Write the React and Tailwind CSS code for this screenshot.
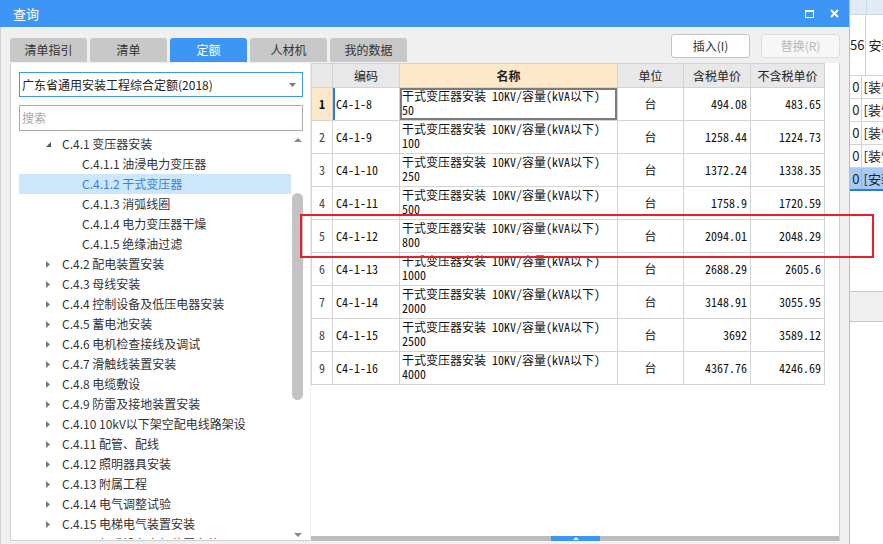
import React from "react";

// font stacks
const UI = "font-['Noto_Sans_CJK_SC','Noto_Sans',sans-serif]";
const SONG = "font-['Noto_Sans_Mono_CJK_SC','Noto_Sans_CJK_SC',monospace]";

const tabs = ["清单指引", "清单", "定额", "人材机", "我的数据"];

const tree = [
  { lv: 1, open: true, t: "C.4.1 变压器安装" },
  { lv: 2, t: "C.4.1.1 油浸电力变压器" },
  { lv: 2, t: "C.4.1.2 干式变压器", sel: true },
  { lv: 2, t: "C.4.1.3 消弧线圈" },
  { lv: 2, t: "C.4.1.4 电力变压器干燥" },
  { lv: 2, t: "C.4.1.5 绝缘油过滤" },
  { lv: 1, t: "C.4.2 配电装置安装" },
  { lv: 1, t: "C.4.3 母线安装" },
  { lv: 1, t: "C.4.4 控制设备及低压电器安装" },
  { lv: 1, t: "C.4.5 蓄电池安装" },
  { lv: 1, t: "C.4.6 电机检查接线及调试" },
  { lv: 1, t: "C.4.7 滑触线装置安装" },
  { lv: 1, t: "C.4.8 电缆敷设" },
  { lv: 1, t: "C.4.9 防雷及接地装置安装" },
  { lv: 1, t: "C.4.10 10kV以下架空配电线路架设" },
  { lv: 1, t: "C.4.11 配管、配线" },
  { lv: 1, t: "C.4.12 照明器具安装" },
  { lv: 1, t: "C.4.13 附属工程" },
  { lv: 1, t: "C.4.14 电气调整试验" },
  { lv: 1, t: "C.4.15 电梯电气装置安装" },
  { lv: 1, t: "C.4.16 起重设备电气装置安装" },
];

const rows = [
  ["C4-1-8", "50", "494.08", "483.65"],
  ["C4-1-9", "100", "1258.44", "1224.73"],
  ["C4-1-10", "250", "1372.24", "1338.35"],
  ["C4-1-11", "500", "1758.9", "1720.59"],
  ["C4-1-12", "800", "2094.01", "2048.29"],
  ["C4-1-13", "1000", "2688.29", "2605.6"],
  ["C4-1-14", "2000", "3148.91", "3055.95"],
  ["C4-1-15", "2500", "3692", "3589.12"],
  ["C4-1-16", "4000", "4367.76", "4246.69"],
];

const cols = "grid grid-cols-[21px_67px_218px_66px_67px_74px]";
const cell = "border-r border-b border-[#d3d3d3]";

const TreeRow = ({ item }) => (
  <div
    className={`h-[20px] shrink-0 flex items-center text-[12px] whitespace-nowrap ${
      item.sel ? "bg-[#cce6fb] text-[#3b7fd6]" : "text-[#333]"
    }`}
  >
    {item.lv === 1 ? (
      <>
        <div className="w-[43px] pl-[26px] flex items-center">
          {item.open ? (
            <svg width="7" height="7" viewBox="0 0 7 7">
              <path d="M6 1 L6 6 L1 6 Z" fill="#555" />
            </svg>
          ) : (
            <svg width="6" height="9" viewBox="0 0 6 9">
              <path d="M1 1 L5 4.5 L1 8 Z" fill="#7a7a7a" />
            </svg>
          )}
        </div>
        <span>{item.t}</span>
      </>
    ) : (
      <span className="pl-[63px]">{item.t}</span>
    )}
  </div>
);

const App = () => {
  return (
    <div className={`relative w-[883px] h-[544px] flex overflow-hidden bg-white ${UI}`}>
      {/* dialog */}
      <div className="w-[850px] h-full flex flex-col bg-[#f0f0f0] border-r border-[#bdbdbd]">
        <div className="h-[27px] shrink-0 bg-[#3d95f5] flex items-center justify-between pl-[13px] pr-[10px]">
          <span className="text-white text-[13px]">查询</span>
          <div className="flex items-center gap-[16px]">
            <div className="w-[9px] h-[8px] border border-white border-t-2" />
            <svg width="9" height="9" viewBox="0 0 9 9">
              <path d="M1 1 L8 8 M8 1 L1 8" stroke="white" strokeWidth="2" />
            </svg>
          </div>
        </div>

        <div className="flex-1 flex flex-col border-l border-[#d0d0d0]">
          {/* tabs + buttons */}
          <div className="h-[36px] shrink-0 flex justify-between">
            <div className="flex gap-[3px] pl-[9px] self-end pb-[1px]">
              {tabs.map((t) => (
                <div
                  key={t}
                  className={`w-[77px] h-[24px] rounded-t-[3px] flex items-center justify-center text-[12px] ${
                    t === "定额" ? "bg-[#3d95f5] text-white" : "bg-[#c8c8c8] text-[#333]"
                  }`}
                >
                  {t}
                </div>
              ))}
            </div>
            <div className="flex gap-[11px] pt-[7px] pr-[9px]">
              <div className="w-[79px] h-[24px] bg-white border border-[#c4c4c4] rounded-[3px] flex items-center justify-center text-[12px] text-[#333]">
                插入(I)
              </div>
              <div className="w-[79px] h-[24px] bg-[#f7f7f7] border border-[#dedede] rounded-[3px] flex items-center justify-center text-[12px] text-[#b8b8b8]">
                替换(R)
              </div>
            </div>
          </div>

          {/* content */}
          <div className="h-[478px] shrink-0 flex gap-[1px] pl-[9px]">
            {/* left panel */}
            <div className="w-[300px] bg-white border-l border-b border-[#d0d0d0] flex flex-col pl-[8px] pt-[9px]">
              <div className="w-[284px] h-[25px] border border-[#3d95f5] flex items-center justify-between pl-[2px] pr-[6px] text-[12px] text-[#222]">
                <span>广东省通用安装工程综合定额(2018)</span>
                <svg width="7" height="4" viewBox="0 0 7 4">
                  <path d="M0 0 L7 0 L3.5 4 Z" fill="#7a7a7a" />
                </svg>
              </div>
              <div className="mt-[8px] w-[284px] h-[26px] border border-[#a9a9a9] flex items-center pl-[2px] text-[12px] text-[#a8a8a8]">
                搜索
              </div>
              <div className="mt-[3px] flex h-[405px] overflow-hidden">
                <div className="w-[272px] flex flex-col">
                  {tree.map((it) => (
                    <TreeRow key={it.t} item={it} />
                  ))}
                </div>
                <div className="w-[13px] flex flex-col items-center">
                  <div className="h-[12px] flex items-center">
                    <svg width="8" height="4" viewBox="0 0 8 4">
                      <path d="M0 4 L8 4 L4 0 Z" fill="#8a8a8a" />
                    </svg>
                  </div>
                  <div className="flex-1 flex flex-col items-center">
                    <div className="mt-[47px] w-[11px] h-[207px] rounded-full bg-[#c3c3c3]" />
                  </div>
                  <div className="h-[6px] flex items-start">
                    <svg width="8" height="4" viewBox="0 0 8 4">
                      <path d="M0 0 L8 0 L4 4 Z" fill="#8a8a8a" />
                    </svg>
                  </div>
                </div>
              </div>
            </div>

            {/* right panel */}
            <div className="w-[529px] bg-white border-r border-[#cfcfcf] flex flex-col">
              <div className="w-[514px] border-l border-t border-[#d3d3d3]">
                <div className={`${cols} h-[24px] text-[12px] text-[#222]`}>
                  <div className={`${cell} bg-[#e8e8e8]`} />
                  <div className={`${cell} bg-[#e8e8e8] flex items-center justify-center`}>编码</div>
                  <div className={`${cell} bg-[#fde8c9] flex items-center justify-center font-bold`}>名称</div>
                  <div className={`${cell} bg-[#e8e8e8] flex items-center justify-center`}>单位</div>
                  <div className={`${cell} bg-[#e8e8e8] flex items-center justify-center`}>含税单价</div>
                  <div className={`${cell} bg-[#e8e8e8] flex items-center justify-center`}>不含税单价</div>
                </div>
                {rows.map((r, i) => (
                  <div key={r[0]} className={`${cols} h-[33px] text-[12px] text-[#111] ${SONG}`}>
                    <div
                      className={`${cell} flex items-center justify-center ${
                        i === 0 ? "bg-[#fde8c9] font-bold" : "text-[#444]"
                      }`}
                    >
                      {i + 1}
                    </div>
                    <div
                      className={`${cell} flex items-center pl-[3px] ${
                        i === 0 ? "shadow-[inset_2px_0_0_#2f7de1]" : ""
                      }`}
                    >
                      {r[0]}
                    </div>
                    <div
                      className={`${cell} pl-[2px] pt-[1px] leading-[14px] ${
                        i === 0 ? "shadow-[inset_0_0_0_2px_#7b7b7b]" : ""
                      }`}
                    >
                      <div className="whitespace-nowrap">干式变压器安装 10KV/容量(kVA以下)</div>
                      <div>{r[1]}</div>
                    </div>
                    <div className={`${cell} flex items-center justify-center`}>台</div>
                    <div className={`${cell} flex items-center justify-end pr-[3px]`}>{r[2]}</div>
                    <div className={`${cell} flex items-center justify-end pr-[3px]`}>{r[3]}</div>
                  </div>
                ))}
              </div>
              <div className="flex-1" />
              <div className="h-[5px] bg-[#bdbdbd] flex">
                <div className="w-[240px]" />
                <div className="w-[49px] bg-[#3d95f5] flex items-center justify-center">
                  <svg width="6" height="3" viewBox="0 0 6 3">
                    <path d="M0 3 L6 3 L3 0 Z" fill="white" />
                  </svg>
                </div>
              </div>
            </div>
          </div>
        </div>
      </div>

      {/* strip of the window behind */}
      <div className="w-[33px] h-full flex flex-col bg-white text-[13px] text-[#222]">
        <div className="h-[15px] flex bg-[#e1ebf8] border-b border-[#cdd8e6]">
          <div className="w-[17px] border-r border-[#cdd8e6]" />
        </div>
        <div className="h-[61px] flex border-b border-[#d6d6d6]">
          <div className="w-[17px] border-r border-[#d0d0d0] flex items-center justify-end pr-[1px]">56</div>
          <div className="pl-[2px] flex items-center overflow-hidden whitespace-nowrap">安装</div>
        </div>
        {[0, 1, 2, 3].map((k) => (
          <div key={k} className="h-[23px] flex border-b border-[#d6d6d6]">
            <div className="w-[17px] border-r border-[#d0d0d0] flex items-center justify-end pr-[1px]">0</div>
            <div className="pl-[2px] flex items-center overflow-hidden whitespace-nowrap">[装饰</div>
          </div>
        ))}
        <div className="h-[23px] flex bg-[#a6cbf5] border-b-2 border-[#2a7ae2]">
          <div className="w-[17px] border-r border-[#8fb4e0] flex items-center justify-end pr-[1px]">0</div>
          <div className="pl-[2px] flex items-center overflow-hidden whitespace-nowrap">[安装</div>
        </div>
        <div className="h-[100px]" />
        <div className="h-[31px] bg-[#f0f0f0] border-t border-b border-[#c8c8c8]" />
        <div className="flex-1" />
      </div>

      {/* red annotation box */}
      <div className="absolute left-[300px] top-[214px] w-[574px] h-[44px] border-2 border-[#e5202a]" />
    </div>
  );
};

export default App;
